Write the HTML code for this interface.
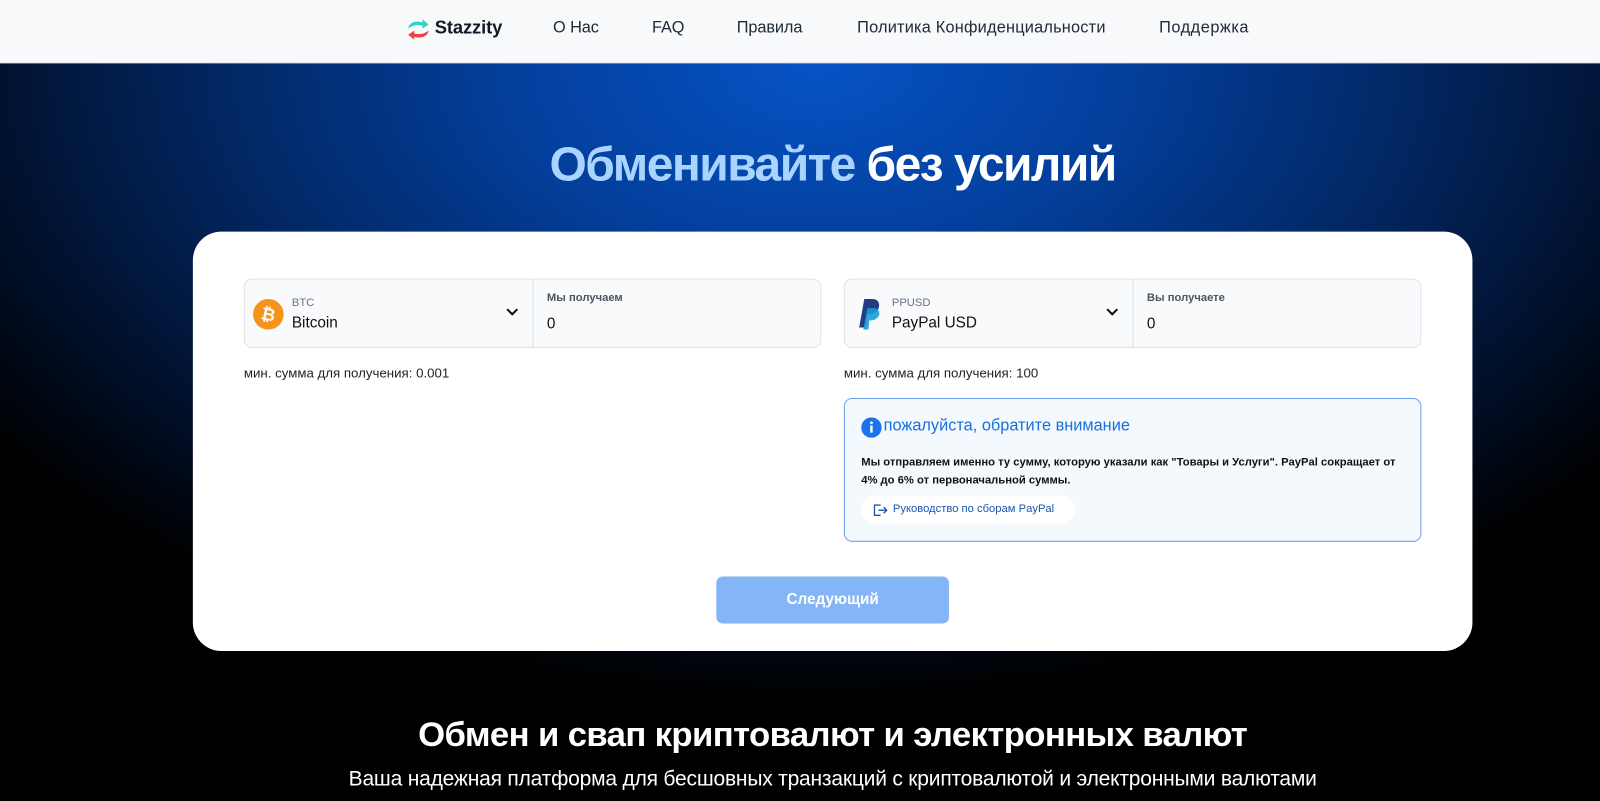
<!DOCTYPE html>
<html><head><meta charset="utf-8">
<style>
*{margin:0;padding:0;box-sizing:border-box}
html,body{width:1600px;height:801px;overflow:hidden;background:#000}
body{font-family:"Liberation Sans",sans-serif;position:relative}
#w{position:absolute;left:0;top:0;width:1568px;height:785px;transform:scale(1.0204);transform-origin:0 0}
.nav{position:absolute;top:0;left:0;width:1568px;height:62px;background:#f8f9fb;border-bottom:1px solid #e5e7eb;z-index:2}
.nav a{position:absolute;top:19px;font-size:16px;color:#1f2937;text-decoration:none;letter-spacing:-0.1px}
.hero{position:absolute;top:62px;left:0;width:1568px;height:723px;
background:radial-gradient(ellipse 1000px 620px at 800px 0px,#0653c6 0%,#033f9c 30%,#022a6a 55%,#011230 80%,#000 100%)}
h1{position:absolute;top:133px;left:32px;width:1568px;text-align:center;font-size:47px;font-weight:bold;color:#fff;letter-spacing:-1.5px}
h1 span{color:#a9d4ff}
.card{position:absolute;left:189px;top:227px;width:1254px;height:411px;background:#fff;border-radius:28px}
.box{position:absolute;top:46px;height:68px;background:#f8fafc;border:1px solid #dfe3e8;border-radius:8px}
.box .div{position:absolute;top:0;left:282px;width:1px;height:66px;background:#dfe3e8}
.small{position:absolute;font-size:11px;color:#6b7280}
.big{position:absolute;font-size:15px;color:#111}
.min{position:absolute;top:131px;font-size:13px;color:#222}
.note{position:absolute;left:638px;top:163px;width:566px;height:141px;background:#f4f9fe;border:1px solid #6ea0f0;border-radius:8px}
.btn{position:absolute;left:513px;top:338px;width:228px;height:46px;background:#84b5f6;border-radius:6px;color:#fff;font-weight:bold;font-size:15px;text-align:center;line-height:46px}
h2{position:absolute;top:701px;left:32px;width:1568px;text-align:center;color:#fff;font-size:34px;font-weight:bold;letter-spacing:-0.6px}
.sub{position:absolute;top:752px;left:32px;width:1568px;text-align:center;color:#fff;font-size:20.6px;letter-spacing:-0.2px}
</style></head><body><div id="w">
<div class="hero"></div>
<div class="nav">
<svg style="position:absolute;left:397px;top:17px" width="26" height="24" viewBox="0 0 26 24"><path d="M3 11 C4 5 10 3 17 5 L17 2 L23 7 L17 11 L17 8 C11 7 7 8 3 11Z" fill="#2dd4bf"/><path d="M23 13 C22 19 16 21 9 19 L9 22 L3 17 L9 13 L9 16 C15 17 19 16 23 13Z" fill="#ef4444"/></svg>
<a style="left:426px;top:17px;font-weight:bold;font-size:18px;color:#111827">Stazzity</a>
<a style="left:542px">О Нас</a>
<a style="left:639px">FAQ</a>
<a style="left:722px">Правила</a>
<a style="left:840px;letter-spacing:0.2px">Политика Конфиденциальности</a>
<a style="left:1136px;letter-spacing:0.5px">Поддержка</a>
</div>
<h1><span>Обменивайте</span> без усилий</h1>
<div class="card">
 <div class="box" style="left:50px;width:566px">
  <svg style="position:absolute;left:8px;top:19px" width="30" height="30" viewBox="0 0 30 30"><circle cx="15" cy="15" r="15" fill="#f7931a"/><text x="15" y="21" text-anchor="middle" font-size="17" font-weight="bold" fill="#fff" font-family="Liberation Sans" transform="rotate(12 15 15)">₿</text></svg>
  <div class="small" style="left:46px;top:17px">BTC</div>
  <div class="big" style="left:46px;top:34px;font-weight:500">Bitcoin</div>
  <svg style="position:absolute;left:256px;top:28px" width="12" height="8" viewBox="0 0 12 8"><path d="M1 1 L6 6 L11 1" stroke="#111" stroke-width="2" fill="none"/></svg>
  <div class="div"></div>
  <div class="small" style="left:296px;top:12px;font-weight:bold;color:#4b5563">Мы получаем</div>
  <div class="big" style="left:296px;top:35px">0</div>
 </div>
 <div class="min" style="left:50px">мин. сумма для получения: 0.001</div>
 <div class="box" style="left:638px;width:566px">
  <svg style="position:absolute;left:10px;top:17px" width="26" height="32" viewBox="0 0 26 32"><path d="M4 30 L9 2 L17 2 C24 2 25 9 22 13 C20 16 16 17 12 17 L10 30Z" fill="#253b80"/><path d="M8 32 L12 11 L19 11 C25 12 25 19 21 21 C19 23 16 23 14 23 L13 32Z" fill="#179bd7" opacity=".9"/></svg>
  <div class="small" style="left:46px;top:17px">PPUSD</div>
  <div class="big" style="left:46px;top:34px;font-weight:500">PayPal USD</div>
  <svg style="position:absolute;left:256px;top:28px" width="12" height="8" viewBox="0 0 12 8"><path d="M1 1 L6 6 L11 1" stroke="#111" stroke-width="2" fill="none"/></svg>
  <div class="div"></div>
  <div class="small" style="left:296px;top:12px;font-weight:bold;color:#4b5563">Вы получаете</div>
  <div class="big" style="left:296px;top:35px">0</div>
 </div>
 <div class="min" style="left:638px">мин. сумма для получения: 100</div>
 <div class="note">
  <svg style="position:absolute;left:16px;top:18px" width="20" height="20" viewBox="0 0 20 20"><circle cx="10" cy="10" r="10" fill="#1a73e8"/><rect x="8.8" y="8" width="2.4" height="7" fill="#fff"/><circle cx="10" cy="5.3" r="1.4" fill="#fff"/></svg>
  <div style="position:absolute;left:38px;top:18px;font-size:16px;color:#1a6fe0">пожалуйста, обратите внимание</div>
  <div style="position:absolute;left:16px;top:53px;width:540px;font-size:11px;font-weight:bold;color:#111;line-height:18px">Мы отправляем именно ту сумму, которую указали как "Товары и Услуги". PayPal сокращает от 4% до 6% от первоначальной суммы.</div>
  <div style="position:absolute;left:16px;top:95px;width:210px;height:28px;background:#fff;border-radius:14px">
   <svg style="position:absolute;left:12px;top:8px" width="14" height="12" viewBox="0 0 14 12"><path d="M7 1 H1 V11 H7 M5 6 H13 M10 3 L13 6 L10 9" stroke="#1a56b0" stroke-width="1.3" fill="none"/></svg>
   <div style="position:absolute;left:31px;top:7px;font-size:11px;color:#1a56b0">Руководство по сборам PayPal</div>
  </div>
 </div>
 <div class="btn">Следующий</div>
</div>
<h2>Обмен и свап криптовалют и электронных валют</h2>
<div class="sub">Ваша надежная платформа для бесшовных транзакций с криптовалютой и электронными валютами</div>
</div></body></html>
